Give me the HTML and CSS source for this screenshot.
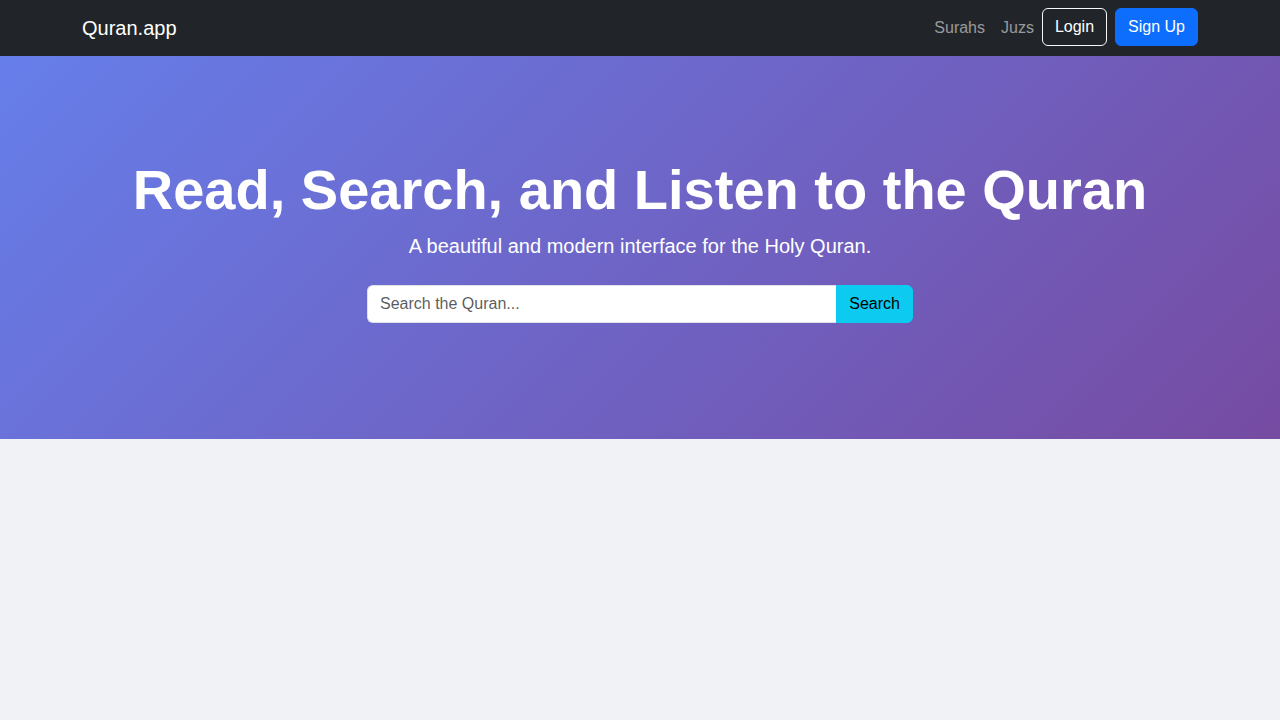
FILE: index.html
```html
<!DOCTYPE html>
<html lang="en">
<head>
<meta charset="utf-8">
<title>Quran.app</title>
<link rel="stylesheet" href="styles.css">
</head>
<body>
<nav class="navbar">
  <div class="container nav-inner">
    <a class="brand" href="#">Quran.app</a>
    <ul class="nav-list">
      <li><a class="nav-link" href="#">Surahs</a></li>
      <li><a class="nav-link" href="#">Juzs</a></li>
      <li><a class="btn btn-outline" href="#">Login</a></li>
      <li><a class="btn btn-primary" href="#">Sign Up</a></li>
    </ul>
  </div>
</nav>
<section class="hero">
  <div class="container hero-inner">
    <h1 class="hero-title">Read, Search, and Listen to the Quran</h1>
    <p class="lead">A beautiful and modern interface for the Holy Quran.</p>
    <form class="search-form">
      <input class="search-input" type="text" placeholder="Search the Quran...">
      <button class="btn-search" type="button">Search</button>
    </form>
  </div>
</section>
</body>
</html>
```

FILE: styles.css
```css
* { box-sizing: border-box; }
html, body {
  margin: 0;
  padding: 0;
}
body {
  font-family: "Liberation Sans", Arial, sans-serif;
  font-size: 16px;
  line-height: 1.5;
  color: #212529;
  background: #f0f2f5;
  min-height: 720px;
}
a { text-decoration: none; }

.container {
  width: 1140px;
  margin: 0 auto;
  padding: 0 12px;
}

.navbar {
  background: #212529;
  height: 56px;
}
.nav-inner {
  height: 56px;
  display: flex;
  align-items: center;
  justify-content: space-between;
}
.brand {
  color: #fff;
  font-size: 20px;
  line-height: 30px;
  padding: 5px 0;
}
.nav-list {
  list-style: none;
  margin: 0;
  padding: 0;
  display: flex;
  align-items: flex-start;
}
.nav-link {
  display: block;
  padding: 8px 8px;
  color: rgba(255, 255, 255, 0.55);
  font-size: 16px;
  line-height: 24px;
}
.btn {
  display: inline-block;
  font-size: 16px;
  line-height: 24px;
  padding: 6px 12px;
  border-radius: 6px;
  border: 1px solid transparent;
}
.btn-outline {
  color: #fff;
  border-color: #f8f9fa;
  margin-right: 8px;
}
.btn-primary {
  color: #fff;
  background: #0d6efd;
  border-color: #0d6efd;
}

.hero {
  background: linear-gradient(135deg, #667eea 0%, #764ba2 100%);
  height: 383px;
  padding-top: 100px;
  color: #fff;
}
.hero-inner {
  display: flex;
  flex-direction: column;
  align-items: center;
  text-align: center;
}
.hero-title {
  margin: 0 0 8px;
  font-size: 56px;
  line-height: 1.2;
  font-weight: 700;
}
.lead {
  margin: 0 0 24px;
  font-size: 20px;
  line-height: 30px;
}
.search-form {
  display: flex;
  width: 546px;
  margin: 0;
}
.search-input {
  flex: 1;
  min-width: 0;
  height: 38px;
  padding: 6px 12px;
  font-family: inherit;
  font-size: 16px;
  line-height: 24px;
  color: #212529;
  background: #fff;
  border: 1px solid #dee2e6;
  border-right: none;
  border-radius: 6px 0 0 6px;
  outline: none;
}
.search-input::placeholder {
  color: rgba(33, 37, 41, 0.75);
}
.btn-search {
  height: 38px;
  padding: 6px 12px;
  font-family: inherit;
  font-size: 16px;
  line-height: 24px;
  color: #000;
  background: #0dcaf0;
  border: 1px solid #0dcaf0;
  border-radius: 0 6px 6px 0;
}
```
